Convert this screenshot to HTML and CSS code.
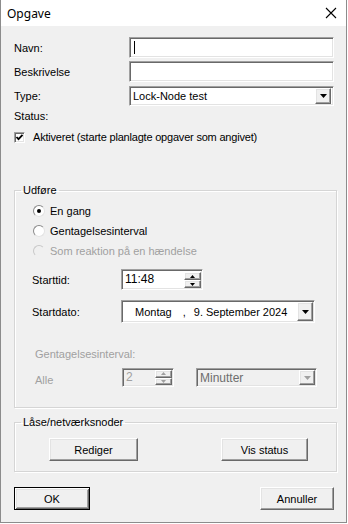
FILE: index.html
```html
<!DOCTYPE html>
<html lang="da">
<head>
  <meta charset="UTF-8">
  <meta name="viewport" content="width=device-width, initial-scale=1.0">
  <title>Opgave</title>
  <link rel="stylesheet" href="styles.css">
</head>
<body>
  <div class="window">
    <!-- Title bar -->
    <div class="titlebar">
      <span class="title">Opgave</span>
      <svg class="close" width="12" height="12" viewBox="0 0 12 12">
        <path d="M1 1L11 11M11 1L1 11" stroke="#000" stroke-width="1.1" fill="none"/>
      </svg>
    </div>

    <div class="content">
      <div class="field-row">
        <span class="field-label">Navn:</span>
        <div class="edit sunken"><span class="caret"></span></div>
      </div>
      <div class="field-row row-gap">
        <span class="field-label">Beskrivelse</span>
        <div class="edit sunken"></div>
      </div>
      <div class="field-row combo-row">
        <span class="field-label">Type:</span>
        <div class="combo sunken">
          <span class="combo-text">Lock-Node test</span>
          <span class="drop-btn raised">
            <svg width="7" height="4" viewBox="0 0 7 4"><path d="M0 0H7L3.5 4Z" fill="#000"/></svg>
          </span>
        </div>
      </div>
      <div class="status">Status:</div>
      <div class="check-row">
        <span class="checkbox sunken">
          <svg width="9" height="9" viewBox="0 0 9 9"><path d="M1.5 4L3.5 6.2L7.5 1.8" stroke="#000" stroke-width="1.8" fill="none"/></svg>
        </span>
        <span class="check-text">Aktiveret (starte planlagte opgaver som angivet)</span>
      </div>

      <!-- Run options -->
      <fieldset class="group group-run">
        <legend>Udføre</legend>
        <div class="group-body">
          <div class="radio-row"><span class="radio checked"></span>En gang</div>
          <div class="radio-row"><span class="radio"></span>Gentagelsesinterval</div>
          <div class="radio-row disabled"><span class="radio"></span>Som reaktion på en hændelse</div>

          <div class="param-row time-row">
            <span class="param-label">Starttid:</span>
            <div class="spin time-box sunken">
              <span class="spin-text">11:48</span>
              <span class="spin-btns">
                <span class="spin-btn raised"><svg width="5" height="3" viewBox="0 0 5 3"><path d="M2.5 0L5 3H0Z" fill="#000"/></svg></span>
                <span class="spin-btn raised"><svg width="5" height="3" viewBox="0 0 5 3"><path d="M0 0H5L2.5 3Z" fill="#000"/></svg></span>
              </span>
            </div>
          </div>

          <div class="param-row date-row">
            <span class="param-label">Startdato:</span>
            <div class="date-box sunken">
              <span class="date-day">Montag</span>
              <span class="date-sep">,</span>
              <span class="date-val">9. September 2024</span>
              <span class="drop-btn raised">
                <svg width="7" height="4" viewBox="0 0 7 4"><path d="M0 0H7L3.5 4Z" fill="#000"/></svg>
              </span>
            </div>
          </div>

          <div class="interval-label disabled">Gentagelsesinterval:</div>
          <div class="param-row interval-row disabled">
            <span class="param-label">Alle</span>
            <div class="spin count-box sunken">
              <span class="spin-text">2</span>
              <span class="spin-btns">
                <span class="spin-btn raised"><svg width="5" height="3" viewBox="0 0 5 3"><path d="M2.5 0L5 3H0Z" fill="#a0a0a0"/></svg></span>
                <span class="spin-btn raised"><svg width="5" height="3" viewBox="0 0 5 3"><path d="M0 0H5L2.5 3Z" fill="#a0a0a0"/></svg></span>
              </span>
            </div>
            <div class="combo unit-box sunken">
              <span class="combo-text">Minutter</span>
              <span class="drop-btn raised">
                <svg width="7" height="4" viewBox="0 0 7 4"><path d="M0 0H7L3.5 4Z" fill="#a0a0a0"/></svg>
              </span>
            </div>
          </div>
        </div>
      </fieldset>

      <!-- Lock / network nodes -->
      <fieldset class="group group-nodes">
        <legend>Låse/netværksnoder</legend>
        <div class="group-body nodes-body">
          <button class="btn raised btn-edit">Rediger</button>
          <button class="btn raised btn-status">Vis status</button>
        </div>
      </fieldset>

      <div class="footer">
        <button class="btn raised btn-default">OK</button>
        <button class="btn raised btn-cancel">Annuller</button>
      </div>
    </div>
  </div>
</body>
</html>
```

FILE: styles.css
```css
* {
  box-sizing: border-box;
}

body {
  margin: 0;
  background-color: #fff;
  font-family: "Liberation Sans", Arial, sans-serif;
  font-size: 11px;
  color: #000;
}

.window {
  width: 347px;
  height: 523px;
  border: 1px solid #8c8c8c;
  border-top: none;
  background-color: #f0f0f0;
}

.titlebar {
  height: 26px;
  background-color: #fff;
  display: flex;
  align-items: center;
  justify-content: space-between;
  padding: 0 9px 0 6px;
}

.title {
  font-family: "Noto Sans", sans-serif;
  font-size: 12px;
}

/* 3D borders */
.sunken {
  background-color: #fff;
  border: 1px solid;
  border-color: #a0a0a0 #fff #fff #a0a0a0;
  box-shadow: inset 1px 1px 0 #696969, inset -1px -1px 0 #e3e3e3;
}

.raised {
  background-color: #f0f0f0;
  border: 1px solid;
  border-color: #fff #696969 #696969 #fff;
  box-shadow: inset -1px -1px 0 #a0a0a0, inset 1px 1px 0 #e3e3e3;
}

.content {
  padding: 11px 9px 0 13px;
}

.field-row {
  display: flex;
  align-items: center;
  height: 21px;
  padding-right: 3px;
  margin-bottom: 3px;
}

.row-gap {
  margin-bottom: 4px;
}

.combo-row {
  height: 20px;
  margin-bottom: 0;
}

.field-label {
  width: 115px;
}

.edit {
  flex: 1;
  height: 21px;
  padding: 3px 0 0 4px;
}

.caret {
  display: block;
  width: 1px;
  height: 13px;
  background-color: #000;
}

.combo {
  flex: 1;
  height: 20px;
  display: flex;
  align-items: center;
  padding: 0 2px 0 3px;
}

.combo-text {
  flex: 1;
}

.drop-btn {
  width: 16px;
  height: 16px;
  display: flex;
  align-items: center;
  justify-content: center;
}

.status {
  margin-top: 2px;
  line-height: 16px;
}

.check-row {
  display: flex;
  align-items: center;
  gap: 8px;
  margin-top: 5px;
  height: 16px;
}

.check-text {
  letter-spacing: -0.2px;
}

.checkbox {
  width: 11px;
  height: 11px;
  display: flex;
  align-items: center;
  justify-content: center;
}

/* Group boxes */
.group {
  margin: 0;
  padding: 0;
  min-width: 0;
  border: 1px solid #d5d5d5;
  box-shadow: inset 1px 1px 0 #fff, 1px 1px 0 #fff;
}

.group legend {
  margin-left: 6px;
  padding: 0 2px;
  line-height: 13px;
}

.group-run {
  margin-top: 39px;
}

.group-body {
  padding: 4px 0 20px 18px;
}

.radio-row {
  display: flex;
  align-items: center;
  gap: 5px;
  height: 20px;
}

.radio {
  position: relative;
  width: 12px;
  height: 12px;
  border-radius: 50%;
  background-color: #fff;
  border: 1px solid;
  border-color: #8a8a8a #e3e3e3 #e3e3e3 #8a8a8a;
}

.radio.checked::after {
  content: "";
  position: absolute;
  left: 3px;
  top: 3px;
  width: 4px;
  height: 4px;
  border-radius: 50%;
  background-color: #000;
}

.disabled {
  color: #a0a0a0;
}

.disabled .radio {
  background-color: #f0f0f0;
  border-color: #c8c8c8 #f0f0f0 #f0f0f0 #c8c8c8;
}

.param-row {
  display: flex;
  align-items: center;
}

.param-label {
  width: 89px;
  margin-left: -1px;
}

.time-row {
  margin-top: 8px;
  height: 21px;
}

.spin {
  display: flex;
  align-items: stretch;
  padding: 2px 1px 1px 2px;
}

.spin-text {
  flex: 1;
  font-size: 12px;
  line-height: 15px;
  padding-left: 1px;
}

.spin-btns {
  width: 17px;
  display: flex;
  flex-direction: column;
}

.spin-btn {
  flex: 1;
  display: flex;
  align-items: center;
  justify-content: center;
}

.time-box {
  width: 82px;
  height: 21px;
}

.date-row {
  margin-top: 10px;
  height: 23px;
}

.date-box {
  width: 194px;
  height: 23px;
  display: flex;
  align-items: center;
  padding: 0 1px 0 13px;
  font-size: 11px;
  white-space: nowrap;
}

.date-sep {
  margin-left: 11px;
}

.date-val {
  margin-left: 8px;
  flex: 1;
}

.date-box .drop-btn {
  height: 19px;
}

.interval-label {
  margin-top: 24px;
  margin-left: 2px;
  line-height: 14px;
}

.interval-row {
  margin-top: 7px;
  height: 19px;
}

.interval-row .param-label {
  margin-left: 2px;
  width: 87px;
  padding-top: 4px;
}

.count-box {
  width: 52px;
  height: 19px;
  background-color: #f0f0f0;
  padding: 1px 1px 1px 2px;
}

.count-box .spin-text {
  line-height: 15px;
}

.unit-box {
  flex: none;
  width: 121px;
  height: 19px;
  margin-left: 22px;
  background-color: #f0f0f0;
  color: #6d6d6d;
  font-size: 12px;
  padding: 0 1px 0 3px;
}

.unit-box .drop-btn {
  height: 15px;
}

.group-nodes {
  margin-top: 8px;
}

.nodes-body {
  display: flex;
  gap: 83px;
  padding: 9px 0 10px 34px;
}

.btn {
  height: 23px;
  font-family: "Liberation Sans", Arial, sans-serif;
  font-size: 11px;
  color: #000;
  padding: 0;
}

.btn-edit {
  width: 89px;
}

.btn-status {
  width: 87px;
}

.footer {
  display: flex;
  justify-content: space-between;
  margin-top: 15px;
  padding-right: 3px;
}

.btn-default {
  width: 76px;
  border-color: #000;
  box-shadow: inset 1px 1px 0 #fff, inset -1px -1px 0 #696969, inset 2px 2px 0 #e3e3e3, inset -2px -2px 0 #a0a0a0;
}

.btn-cancel {
  width: 74px;
}
```
